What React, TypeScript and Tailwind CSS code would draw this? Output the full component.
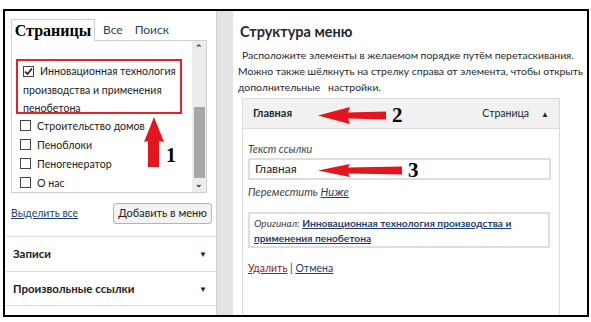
import { memo } from "react";

const Check = ({ checked = false }: { checked?: boolean }) => (
    <span className="inline-flex items-center justify-center w-[11px] h-[11px] border border-[#444] bg-white align-[-1px] mr-[6px]">
        {checked && (
            <svg width="9" height="9" viewBox="0 0 9 9">
                <path d="M1 4.5 L3.5 7 L8 1.5" fill="none" stroke="#1a1a1a" strokeWidth="1.6" />
            </svg>
        )}
    </span>
);

const ArrowLeft = ({ len, head }: { len: number; head: number }) => (
    <svg width={len} height={head} viewBox={`0 0 ${len} ${head}`}>
        <polygon
            points={`0,${head / 2} 32,0 30,${head / 2 - 3} ${len},${head / 2 - 4} ${len},${head / 2 + 4} 30,${head / 2 + 3} 32,${head}`}
            fill="#e5141d"
        />
    </svg>
);

const LeftPanel = () => {
    return (
        <div className="w-[211px] shrink-0 h-full flex flex-col bg-white">
            <div className="flex items-end pl-[6px] pt-[8px] gap-[7px]">
                <div className="w-[84px] h-[22px] -mb-px border border-b-0 border-[#cfcfcf] bg-white z-10 flex items-center justify-center font-['Liberation_Serif',serif] font-bold text-[16px] text-black">
                    Страницы
                </div>
                <span className="text-[12px] text-[#1d3f6e] leading-[20px] pl-[1px]">Все</span>
                <span className="text-[12px] text-[#1d3f6e] leading-[20px] pl-[5px]">Поиск</span>
            </div>
            <div className="ml-[6px] w-[196px] h-[153px] border border-[#cfcfcf] flex relative">
                <div className="flex-1 overflow-hidden pt-[18px] pl-[4px] pr-[11px] text-[10.6px] text-[#222]">
                    <div className="w-[166px] h-[55px] border-2 border-[#e3222b] pl-[5px] pt-[1px] leading-[18.5px] whitespace-nowrap">
                        <Check checked />
                        Инновационная технология
                        <br />
                        производства и применения
                        <br />
                        пенобетона
                    </div>
                    <div className="pl-[4px] pt-[3px] leading-[19px] whitespace-nowrap">
                        {["Строительство домов", "Пеноблоки", "Пеногенератор", "О нас"].map((t) => (
                            <div key={t}>
                                <Check />
                                {t}
                            </div>
                        ))}
                    </div>
                </div>
                <div className="w-[14px] bg-[#ececec] flex flex-col items-center">
                    <span className="h-[14px] text-[9px] leading-[14px] font-bold text-[#333]">⌃</span>
                    <div className="mt-[52px] w-[11px] h-[72px] bg-[#a7a7a7]" />
                    <span className="mt-auto h-[14px] text-[9px] leading-[12px] font-bold text-[#333]">⌄</span>
                </div>
                <div className="absolute left-[131px] top-[76px] flex items-end">
                    <svg width="22" height="50" viewBox="0 0 22 50">
                        <polygon points="11,0 21,25 16,24 16,50 5,50 5,24 1,25" fill="#e5141d" />
                    </svg>
                    <span className="ml-[1px] mb-[2px] font-['Liberation_Serif',serif] font-bold text-[20px] leading-[20px] text-black">
                        1
                    </span>
                </div>
            </div>
            <div className="flex items-center justify-between pl-[6px] pr-[4px] pt-[10px] pb-[12px]">
                <span className="text-[10.5px] text-[#1d3f6e] underline">Выделить все</span>
                <button className="h-[21px] w-[99px] border border-[#b4b4b4] rounded-[3px] bg-[#f3f3f3] text-[11px] text-[#222] whitespace-nowrap">
                    Добавить в меню
                </button>
            </div>
            <div className="border-t border-[#dcdcdc] h-[35px] flex items-center justify-between pl-[8px] pr-[9px] text-[11.5px] font-bold text-[#222]">
                <span>Записи</span>
                <span className="text-[8px]">▼</span>
            </div>
            <div className="border-t border-[#dcdcdc] h-[34px] flex items-center justify-between pl-[8px] pr-[9px] text-[11.5px] font-bold text-[#222]">
                <span>Произвольные ссылки</span>
                <span className="text-[8px]">▼</span>
            </div>
            <div className="border-t border-[#dcdcdc] flex-1" />
        </div>
    );
};

const RightPanel = () => {
    return (
        <div className="flex-1 min-w-0 overflow-hidden h-full bg-white flex flex-col text-[#23282d]">
            <div className="pl-[7px] pt-[11px] text-[14.5px] font-bold leading-[20px]">Структура меню</div>
            <div className="pl-[5px] pt-[5px] text-[10.4px] leading-[16px] whitespace-nowrap">
                <div className="pl-[4px]">Расположите элементы в желаемом порядке путём перетаскивания.</div>
                <div>Можно также шёлкнуть на стрелку справа от элемента, чтобы открыть</div>
                <div>дополнительные&nbsp;&nbsp; настройки.</div>
            </div>
            <div className="ml-[9px] mt-[3px] w-[318px] flex-1 border-x border-[#dcdcdc] flex flex-col relative">
                <div className="h-[31px] bg-[#f1f1f1] border-y border-[#dcdcdc] flex items-center justify-between pl-[10px] pr-[10px] text-[10.5px]">
                    <span className="font-bold text-[11px]">Главная</span>
                    <span className="flex items-center gap-[12px]">
                        Страница <span className="text-[8px]">▲</span>
                    </span>
                </div>
                <div className="pl-[5px] pt-[13px]">
                    <div className="text-[10.8px] italic text-[#444] leading-[14px]">Текст ссылки</div>
                    <div className="mt-[2px] w-[303px] h-[22px] border-2 border-[#dedede] flex items-center pl-[5px] text-[12px] text-[#222]">
                        Главная
                    </div>
                    <div className="mt-[5px] text-[11px] leading-[14px]">
                        <span className="italic text-[#444]">Переместить</span>{" "}
                        <span className="italic text-[#1d3f6e] underline">Ниже</span>
                    </div>
                    <div className="mt-[13px] w-[302px] h-[36px] border-2 border-[#dedede] pl-[4px] pt-[2px] text-[10.2px] leading-[15px] whitespace-nowrap">
                        <span className="italic text-[10px] text-[#444]">Оригинал:</span>{" "}
                        <span className="font-bold text-[#1d3f6e] underline">Инновационная технология производства и</span>
                        <br />
                        <span className="font-bold text-[#1d3f6e] underline">применения пенобетона</span>
                    </div>
                    <div className="mt-[13px] text-[10.5px] leading-[14px]">
                        <span className="text-[#a1161b] underline">Удалить</span>
                        <span className="text-[#333]"> | </span>
                        <span className="text-[#1d3f6e] underline">Отмена</span>
                    </div>
                </div>
                <div className="absolute left-[75px] top-[7px] flex items-center">
                    <ArrowLeft len={68} head={17} />
                    <span className="ml-[6px] font-['Liberation_Serif',serif] font-bold text-[21px] leading-[20px] text-black">2</span>
                </div>
                <div className="absolute left-[75px] top-[62px] flex items-center">
                    <ArrowLeft len={84} head={13} />
                    <span className="ml-[6px] font-['Liberation_Serif',serif] font-bold text-[21px] leading-[20px] text-black">3</span>
                </div>
            </div>
        </div>
    );
};

const App = () => {
    return (
        <div className="w-[591px] h-[322px] bg-white pt-[9px] pl-[3px] font-['Lato',sans-serif]">
            <div className="w-[586px] h-[308px] border-2 border-black flex">
                <LeftPanel />
                <div className="w-[17px] shrink-0 h-full bg-[#e3e3e3] border-l border-[#d0d0d0]" />
                <RightPanel />
            </div>
        </div>
    );
};

export default memo(App);
